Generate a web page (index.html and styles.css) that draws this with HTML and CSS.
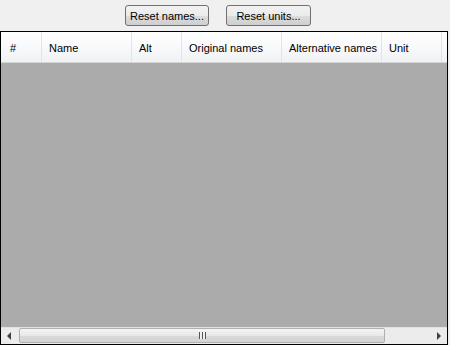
FILE: index.html
```html
<!DOCTYPE html>
<html>
<head>
    <title>Names</title>
    <link rel="stylesheet" href="styles.css">
</head>
<body>
    <div class="toolbar">
        <button class="btn btn-names">Reset names...</button>
        <button class="btn btn-units">Reset units...</button>
    </div>

    <div class="grid">
        <div class="header">
            <div class="col col-num">#</div>
            <div class="col col-name">Name</div>
            <div class="col col-alt">Alt</div>
            <div class="col col-orig">Original names</div>
            <div class="col col-altnames">Alternative names</div>
            <div class="col col-unit">Unit</div>
            <div class="col col-rest"></div>
        </div>
        <div class="rows"></div>
        <div class="hscroll">
            <div class="arrow arrow-left"></div>
            <div class="track">
                <div class="thumb"><span class="grip"></span></div>
            </div>
            <div class="arrow arrow-right"></div>
        </div>
    </div>
</body>
</html>
```

FILE: styles.css
```css
body {
    margin: 0;
    width: 450px;
    height: 345px;
    overflow: hidden;
    background: #f0f0f0;
    font-family: "Liberation Sans", Arial, sans-serif;
    font-size: 11px;
    color: #000;
}
.toolbar {
    display: flex;
    height: 31px;
    padding-left: 125px;
    padding-top: 5px;
    box-sizing: border-box;
}
.btn {
    height: 21px;
    padding: 0;
    border: 1px solid #707070;
    border-radius: 3px;
    background: linear-gradient(#f2f2f2 0%, #ebebeb 50%, #dddddd 51%, #cfcfcf 100%);
    font-family: inherit;
    font-size: 11px;
    color: #000;
}
.btn-names { width: 84px; }
.btn-units { width: 85px; margin-left: 17px; }

.grid {
    width: 448px;
    height: 314px;
    box-sizing: border-box;
    border: 1px solid #000;
    display: flex;
    flex-direction: column;
    background: #ababab;
}
.header {
    display: flex;
    height: 31px;
    flex: none;
    background: linear-gradient(#ffffff 0%, #f7f8fa 60%, #f1f2f4 100%);
    border-bottom: 1px solid #d5d5d5;
    box-sizing: border-box;
}
.col {
    flex: none;
    box-sizing: border-box;
    height: 30px;
    line-height: 30px;
    padding-top: 1px;
    padding-left: 7px;
    border-right: 1px solid #e3e4e6;
    white-space: nowrap;
    overflow: hidden;
}
.col-num { width: 41px; padding-left: 9px; }
.col-name { width: 90px; }
.col-alt { width: 50px; }
.col-orig { width: 100px; }
.col-altnames { width: 100px; }
.col-unit { width: 60px; }
.col-rest { width: 5px; border-right: none; }

.rows { flex: 1; }

.hscroll {
    flex: none;
    height: 17px;
    display: flex;
    background: #ececec;
    border-top: 1px solid #e2e2e2;
    box-sizing: border-box;
}
.arrow {
    width: 17px;
    position: relative;
}
.arrow-left::after,
.arrow-right::after {
    content: "";
    position: absolute;
    top: 4px;
    width: 0;
    height: 0;
    border-top: 4px solid transparent;
    border-bottom: 4px solid transparent;
}
.arrow-left::after { left: 6px; border-right: 4px solid #404040; }
.arrow-right::after { left: 7px; border-left: 4px solid #404040; }
.track { flex: 1; display: flex; }
.thumb {
    width: 366px;
    margin: 0 0 1px 1px;
    border: 1px solid #b0b0b0;
    border-radius: 2px;
    background: linear-gradient(#f4f4f4 0%, #e8e8e8 50%, #d9d9d9 51%, #d4d4d4 100%);
    display: flex;
    justify-content: center;
    align-items: center;
    box-sizing: border-box;
}
.grip {
    width: 7px;
    height: 7px;
    background: repeating-linear-gradient(90deg, #555 0 1px, #f0f0f0 1px 3px);
}
```
